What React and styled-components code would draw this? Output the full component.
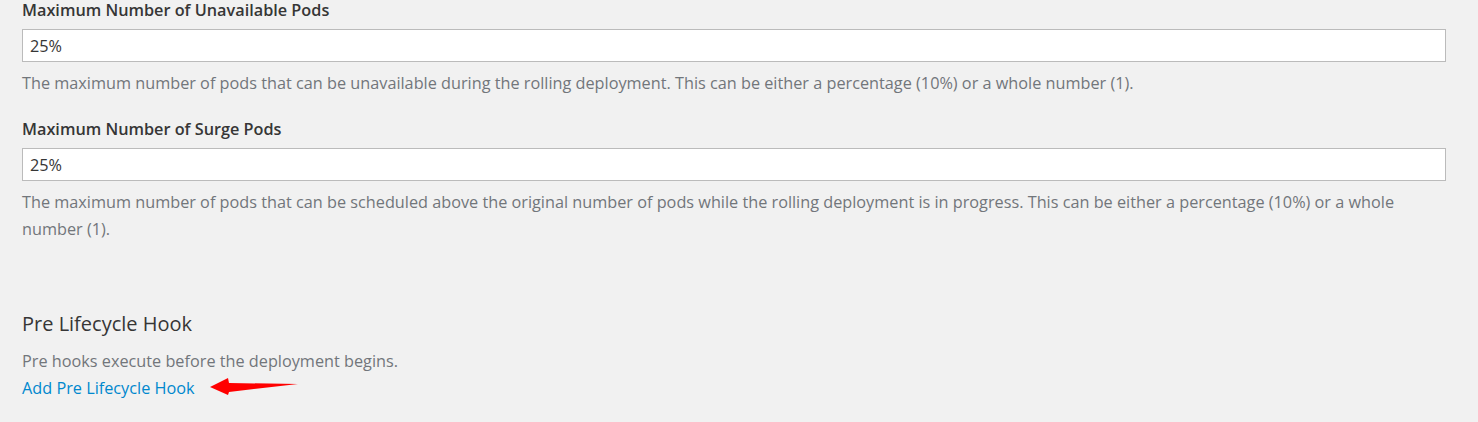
import React from 'react';
import styled, { createGlobalStyle } from 'styled-components';

const GlobalStyle = createGlobalStyle`
    body {
        margin: 0;
        background: #f1f1f1;
        font-family: "Open Sans", "Liberation Sans", sans-serif;
        font-size: 16.25px;
        color: #363636;
    }
`;

const Page = styled.div`
    padding: 0 32px 0 22px;
`;

const Field = styled.div`
    margin-bottom: 22px;
`;

const Label = styled.label`
    display: block;
    font-weight: 600;
    line-height: 20px;
    margin-bottom: 9px;
    color: #363636;
`;

const Input = styled.input`
    display: block;
    box-sizing: border-box;
    width: 100%;
    height: 33px;
    margin: 0;
    padding: 0 7px;
    border: 1px solid #bbb;
    background: #fff;
    font-family: inherit;
    font-size: 16.25px;
    color: #363636;
`;

const Help = styled.div`
    margin-top: ${p => (p.$flush ? 0 : 8)}px;
    line-height: 27px;
    color: #72767b;
`;

const Section = styled.div`
    margin-top: 67px;
`;

const Heading = styled.h3`
    margin: 0 0 10px;
    font-size: 20px;
    font-weight: 400;
    line-height: 28px;
    color: #363636;
`;

const LinkRow = styled.div`
    display: flex;
    align-items: center;
    line-height: 26px;
`;

const Link = styled.a`
    color: #0088ce;
    text-decoration: none;
    cursor: pointer;
`;

const Arrow = styled.svg`
    margin-left: 15px;
    flex: none;
`;

function App() {
    return (
        <Page>
            <GlobalStyle />
            <Field>
                <Label>Maximum Number of Unavailable Pods</Label>
                <Input defaultValue="25%" />
                <Help>
                    The maximum number of pods that can be unavailable during the rolling deployment. This can be either a percentage (10%) or a whole number (1).
                </Help>
            </Field>
            <Field>
                <Label>Maximum Number of Surge Pods</Label>
                <Input defaultValue="25%" />
                <Help>
                    The maximum number of pods that can be scheduled above the original number of pods while the rolling deployment is in progress. This can be either a percentage (10%) or a whole number (1).
                </Help>
            </Field>
            <Section>
                <Heading>Pre Lifecycle Hook</Heading>
                <Help $flush>Pre hooks execute before the deployment begins.</Help>
                <LinkRow>
                    <Link>Add Pre Lifecycle Hook</Link>
                    <Arrow width="90" height="20" viewBox="0 0 90 20">
                        <polygon points="0,9 18,0 19,5 88,6 19,14 18,17" fill="#ff0000" />
                    </Arrow>
                </LinkRow>
            </Section>
        </Page>
    );
}

export default App;
